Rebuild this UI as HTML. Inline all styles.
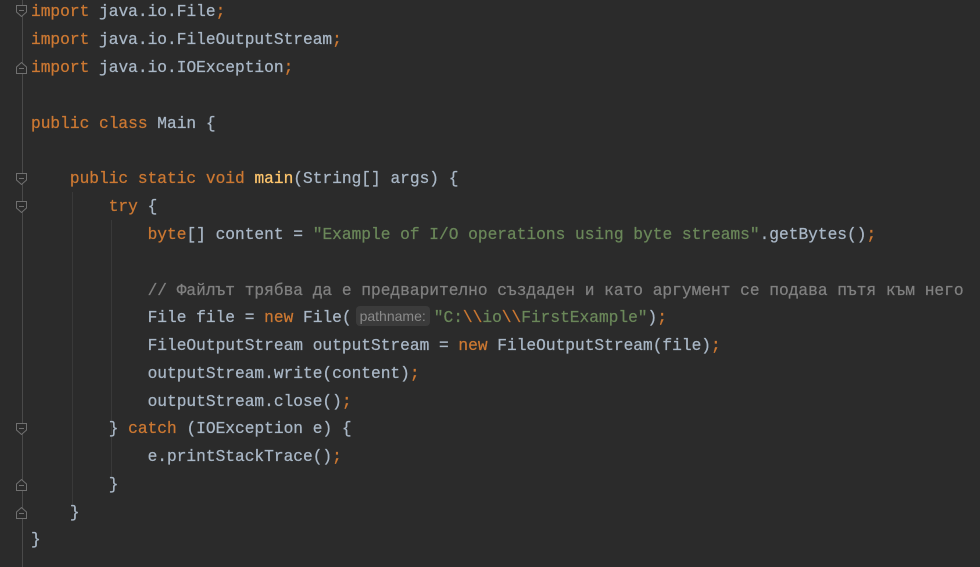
<!DOCTYPE html>
<html><head><meta charset="utf-8"><style>
html,body{margin:0;padding:0;background:#2b2b2b;width:980px;height:567px;overflow:hidden}
.gut{position:absolute;left:22px;top:0;width:1px;height:567px;background:#4a4a4a}
.ig{position:absolute;width:1px;background:#393939}
.l{position:absolute;left:31px;height:28px;line-height:28px;white-space:pre;font-family:"Liberation Mono","DejaVu Sans Mono",monospace;font-size:16.2px;color:#a9b7c6;-webkit-text-stroke:0.25px currentColor}
.k{color:#cc7832}.s{color:#6a8759}.c{color:#808080}.m{color:#ffc66d}
.h{display:inline-block;background:#3b3b3b;color:#8a8a8a;font-family:"Liberation Sans","DejaVu Sans",sans-serif;font-size:14px;line-height:20px;padding:0 4px;border-radius:4px;margin:0 4px 0 4px;vertical-align:1px;-webkit-text-stroke:0}
.f{position:absolute;left:16px;width:11px;height:12px}
</style></head><body>
<div class="gut"></div>
<div class="ig" style="left:72px;top:192px;height:316px"></div>
<div class="ig" style="left:111px;top:220px;height:260px"></div>
<svg class="f" style="top:5px" viewBox="0 0 11 12"><path d="M0.5 0.5H10.5V7L5.5 11.5L0.5 7Z" fill="#2b2b2b" stroke="#707070"/><path d="M3 5.5H8" stroke="#707070"/></svg>
<svg class="f" style="top:62px" viewBox="0 0 11 12"><path d="M0.5 11.5H10.5V5L5.5 0.5L0.5 5Z" fill="#2b2b2b" stroke="#707070"/><path d="M3 6.5H8" stroke="#707070"/></svg>
<svg class="f" style="top:173px" viewBox="0 0 11 12"><path d="M0.5 0.5H10.5V7L5.5 11.5L0.5 7Z" fill="#2b2b2b" stroke="#707070"/><path d="M3 5.5H8" stroke="#707070"/></svg>
<svg class="f" style="top:201px" viewBox="0 0 11 12"><path d="M0.5 0.5H10.5V7L5.5 11.5L0.5 7Z" fill="#2b2b2b" stroke="#707070"/><path d="M3 5.5H8" stroke="#707070"/></svg>
<svg class="f" style="top:423px" viewBox="0 0 11 12"><path d="M0.5 0.5H10.5V7L5.5 11.5L0.5 7Z" fill="#2b2b2b" stroke="#707070"/><path d="M3 5.5H8" stroke="#707070"/></svg>
<svg class="f" style="top:479px" viewBox="0 0 11 12"><path d="M0.5 11.5H10.5V5L5.5 0.5L0.5 5Z" fill="#2b2b2b" stroke="#707070"/><path d="M3 6.5H8" stroke="#707070"/></svg>
<svg class="f" style="top:507px" viewBox="0 0 11 12"><path d="M0.5 11.5H10.5V5L5.5 0.5L0.5 5Z" fill="#2b2b2b" stroke="#707070"/><path d="M3 6.5H8" stroke="#707070"/></svg>

<div class="l" style="top:-2px"><span class="k">import</span> java.io.File<span class="k">;</span></div>
<div class="l" style="top:26px"><span class="k">import</span> java.io.FileOutputStream<span class="k">;</span></div>
<div class="l" style="top:54px"><span class="k">import</span> java.io.IOException<span class="k">;</span></div>
<div class="l" style="top:110px"><span class="k">public class</span> Main {</div>
<div class="l" style="top:165px">    <span class="k">public static void</span> <span class="m">main</span>(String[] args) {</div>
<div class="l" style="top:193px">        <span class="k">try</span> {</div>
<div class="l" style="top:221px">            <span class="k">byte</span>[] content = <span class="s">"Example of I/O operations using byte streams"</span>.getBytes()<span class="k">;</span></div>
<div class="l" style="top:277px">            <span class="c">// Файлът трябва да е предварително създаден и като аргумент се подава пътя към него</span></div>
<div class="l" style="top:304px">            File file = <span class="k">new</span> File(<span class="h">pathname:</span><span class="s">"C:<span class="k">\\</span>io<span class="k">\\</span>FirstExample"</span>)<span class="k">;</span></div>
<div class="l" style="top:332px">            FileOutputStream outputStream = <span class="k">new</span> FileOutputStream(file)<span class="k">;</span></div>
<div class="l" style="top:360px">            outputStream.write(content)<span class="k">;</span></div>
<div class="l" style="top:388px">            outputStream.close()<span class="k">;</span></div>
<div class="l" style="top:415px">        } <span class="k">catch</span> (IOException e) {</div>
<div class="l" style="top:443px">            e.printStackTrace()<span class="k">;</span></div>
<div class="l" style="top:471px">        }</div>
<div class="l" style="top:499px">    }</div>
<div class="l" style="top:526px">}</div>
</body></html>
